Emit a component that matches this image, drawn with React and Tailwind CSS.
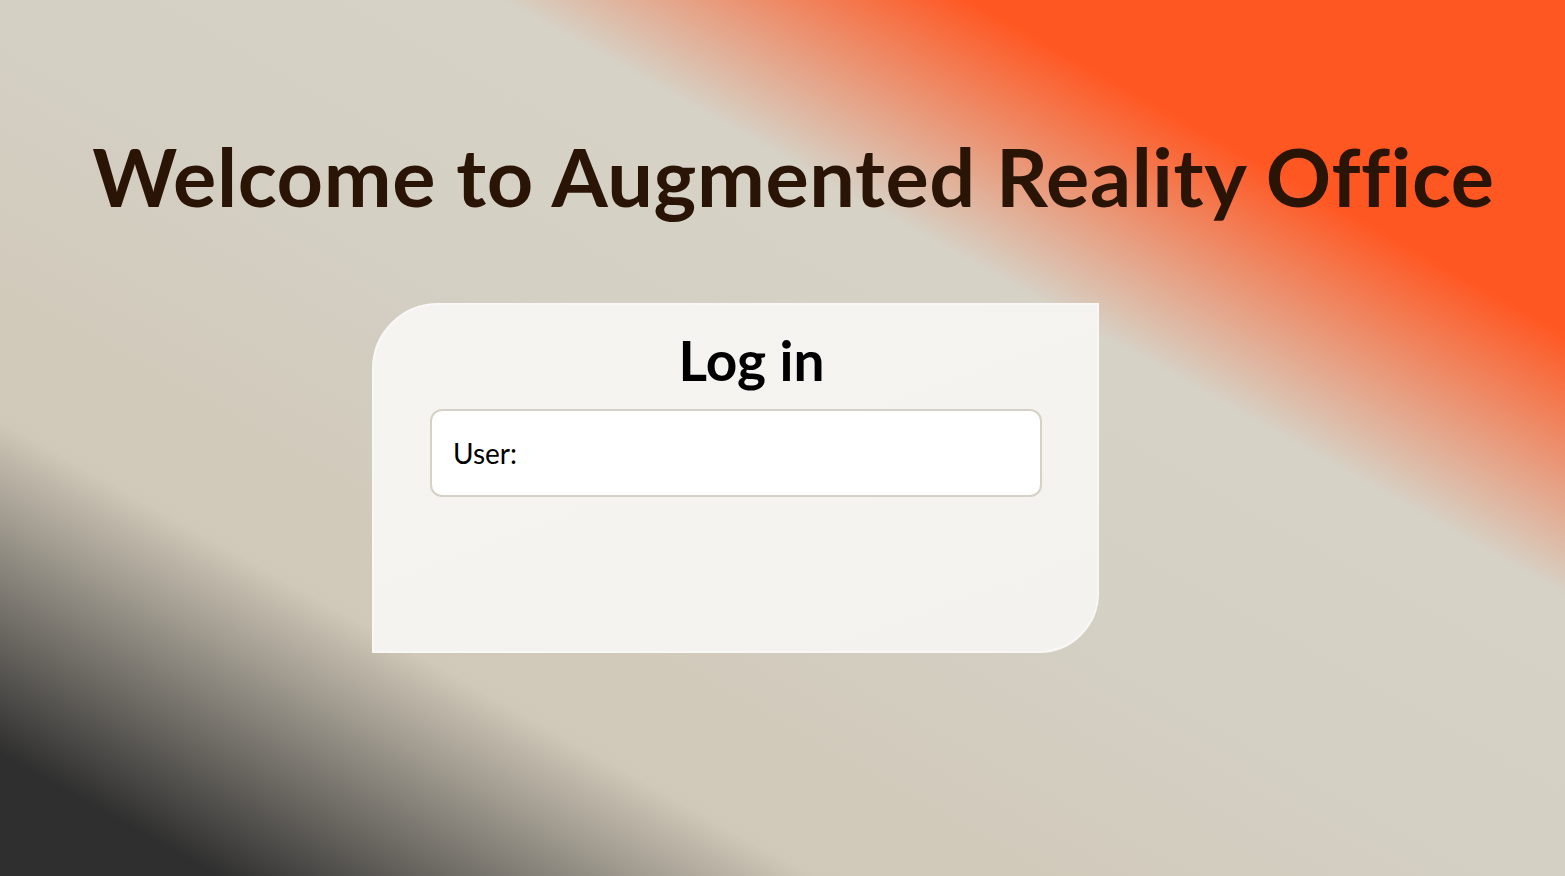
// Login landing page for the AR office

export default function App() {
  return (
    <div
      className="relative h-[876px] w-full overflow-hidden bg-[linear-gradient(to_top_right,#2f2f2f_7%,#d0c8b8_26%,#d4d0c4_50%,#d6d2c6_66%,#ff5722_81%,#ff5722_100%)] font-['Lato','Liberation_Sans',sans-serif]"
    >
      {/* Heading */}
      <div className="flex justify-center pt-[135px] pl-[22px]">
        <h1 className="text-[81px] font-bold leading-none tracking-[0.6px] text-[#2a1406]">
          Welcome to Augmented Reality Office
        </h1>
      </div>

      {/* Log in card */}
      <div className="mt-[87px] ml-[372px] flex h-[350px] w-[727px] flex-col rounded-tl-[66px] rounded-br-[60px] border-2 border-[#f9f8f6] bg-[linear-gradient(160deg,#f5f4f1,#f3f2ee)] px-[56px]">
        <h2 className="mt-[28px] pl-[32px] text-center text-[55px] font-bold leading-none text-black">
          Log in
        </h2>
        <div className="mt-[21px] mr-[-1px] flex h-[88px] items-center rounded-[12px] border-2 border-[#d6d1c6] bg-white px-[21px]">
          <span className="text-[28px] text-black">User:</span>
        </div>
      </div>
    </div>
  );
}
